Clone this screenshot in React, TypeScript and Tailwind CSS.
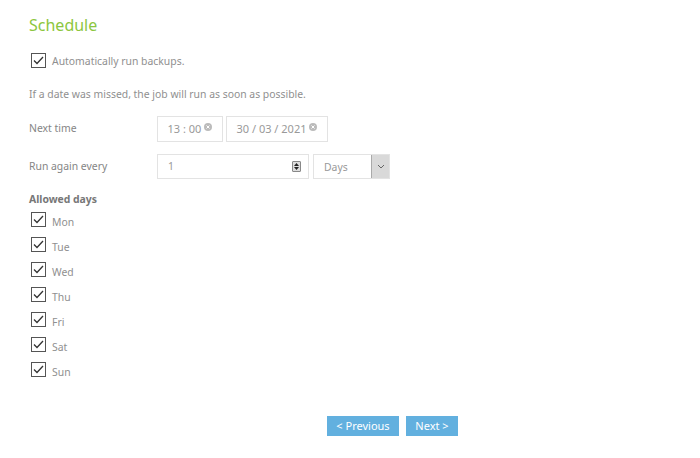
import { FC } from 'react'

const days = ['Mon', 'Tue', 'Wed', 'Thu', 'Fri', 'Sat', 'Sun']

const Check: FC = () => (
  <span className="flex h-[15px] w-[15px] flex-shrink-0 items-center justify-center border border-[#555] bg-white">
    <svg width="11" height="9" viewBox="0 0 11 9" fill="none">
      <path d="M1 4.5L4 7.5L10 1" stroke="#333" strokeWidth="1.3" />
    </svg>
  </span>
)

const ClearDot: FC = () => (
  <svg width="8" height="8" viewBox="0 0 8 8" className="ml-[3px] -mt-[4px]">
    <circle cx="4" cy="4" r="4" fill="#bbb" />
    <path d="M2.5 2.5L5.5 5.5M5.5 2.5L2.5 5.5" stroke="#fff" strokeWidth="1" />
  </svg>
)

const App: FC = () => {
  return (
    <div className="h-[458px] w-[700px] bg-white pl-[29px] pt-[14px] font-['Noto_Sans',sans-serif] text-[10.4px] text-[#8f8f8f]">
      <h2 className="text-[16px] leading-[22px] text-[#8cc63e]">Schedule</h2>

      <label className="mt-[17px] flex h-[15px] items-center gap-[6px] pl-[2px]">
        <Check />
        <span className="mt-[3px]">Automatically run backups.</span>
      </label>

      <p className="mt-[19px] leading-[14px]">If a date was missed, the job will run as soon as possible.</p>

      <div className="mt-[15px] flex items-center">
        <span className="w-[128px] text-[#858585]">Next time</span>
        <div className="flex h-[26px] w-[66px] items-center justify-center border border-[#e3e3e3] text-[11px] text-[#999]">
          13 : 00
          <ClearDot />
        </div>
        <div className="ml-[3px] flex h-[26px] w-[102px] items-center justify-center border border-[#e3e3e3] text-[11px] text-[#999]">
          30 / 03 / 2021
          <ClearDot />
        </div>
      </div>

      <div className="mt-[12px] flex items-center">
        <span className="w-[128px] text-[#858585]">Run again every</span>
        <div className="flex h-[25px] w-[152px] items-center justify-between border border-[#e3e3e3] pl-[10px] pr-[7px] text-[#999]">
          <span>1</span>
          <span className="flex h-[11px] w-[9px] flex-col items-center justify-center gap-[1px] rounded-[1px] border border-[#888] bg-[#ddd]">
            <svg width="5" height="3" viewBox="0 0 5 3">
              <path d="M0 3L2.5 0L5 3Z" fill="#222" />
            </svg>
            <svg width="5" height="3" viewBox="0 0 5 3">
              <path d="M0 0L2.5 3L5 0Z" fill="#222" />
            </svg>
          </span>
        </div>
        <div className="ml-[4px] flex h-[25px] w-[77px] items-stretch border border-[#e3e3e3]">
          <span className="flex flex-1 items-end pb-[2px] pl-[10px] text-[#999]">Days</span>
          <span className="flex w-[18px] items-center justify-center border-l border-[#aaa] bg-[#d9d9d9]">
            <svg width="8" height="5" viewBox="0 0 8 5" fill="none">
              <path d="M1 1L4 4L7 1" stroke="#666" strokeWidth="1" />
            </svg>
          </span>
        </div>
      </div>

      <h4 className="mt-[13px] font-bold leading-[14px] text-[#777]">Allowed days</h4>

      <div className="mt-[6px] flex flex-col gap-[10px] pl-[2px]">
        {days.map((day) => (
          <label key={day} className="flex h-[15px] items-center gap-[6px]">
            <Check />
            <span className="mt-[6px]">{day}</span>
          </label>
        ))}
      </div>

      <div className="mt-[39px] flex gap-[7px] pl-[298px]">
        <button className="h-[20px] w-[72px] bg-[#62b0df] text-[11px] text-white">&lt; Previous</button>
        <button className="h-[20px] w-[52px] bg-[#62b0df] text-[11px] text-white">Next &gt;</button>
      </div>
    </div>
  )
}

export default App
